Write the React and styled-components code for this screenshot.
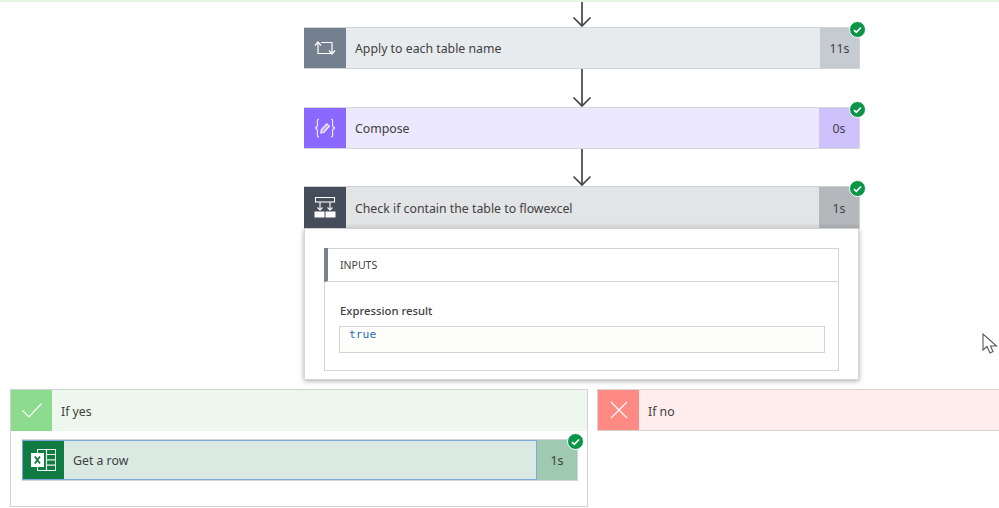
import React from 'react';
import styled, { createGlobalStyle } from 'styled-components';

const GlobalStyle = createGlobalStyle`
  html, body {
    margin: 0;
    padding: 0;
    background: #fff;
  }
  * {
    box-sizing: border-box;
  }
`;

const Page = styled.div`
  position: relative;
  width: 999px;
  height: 508px;
  overflow: hidden;
  background: #fff;
  font-family: "Noto Sans", "Open Sans", sans-serif;
  color: #333;
`;

const TopLine = styled.div`
  height: 2px;
  background: #e3f6e2;
`;

const FlowColumn = styled.div`
  display: flex;
  flex-direction: column;
  width: 556px;
  margin-left: 304px;
`;

const Connector = styled.div`
  display: flex;
  justify-content: center;
  height: ${(p) => p.$height}px;
`;

const Card = styled.div`
  position: relative;
  display: flex;
  width: 556px;
  height: ${(p) => p.$height || 42}px;
  flex: none;
  border: 1px solid ${(p) => p.$border};
  border-left: none;
  background: ${(p) => p.$bg};
  ${(p) =>
    p.$focus &&
    `
    &::after {
      content: "";
      position: absolute;
      top: 0;
      bottom: 0;
      left: 0;
      right: 40px;
      border: 1px solid #7fa6e0;
    }
  `}
`;

const CardIcon = styled.div`
  display: flex;
  align-items: center;
  justify-content: center;
  width: 42px;
  flex: none;
  background: ${(p) => p.$bg};
`;

const CardTitle = styled.div`
  flex: 1;
  display: flex;
  align-items: center;
  padding-left: 9px;
  padding-top: ${(p) => p.$nudge || 0}px;
  font-size: 12.3px;
  color: #404040;
`;

const Duration = styled.div`
  display: flex;
  align-items: center;
  justify-content: center;
  width: ${(p) => p.$width || 39}px;
  flex: none;
  padding-top: ${(p) => p.$nudge || 0}px;
  background: ${(p) => p.$bg};
  font-size: 12.3px;
  color: #404040;
`;

const Badge = styled.div`
  position: absolute;
  z-index: 1;
  top: -7px;
  right: -7px;
  width: 17px;
  height: 17px;
  display: flex;
  align-items: center;
  justify-content: center;
  border-radius: 50%;
  border: 1px solid #fff;
  background: #0a9548;
`;

const Shade = styled.div`
  position: absolute;
  left: 42px;
  right: 0;
  bottom: 0;
  height: 5px;
  background: linear-gradient(rgba(0, 0, 0, 0), rgba(0, 0, 0, 0.09));
`;

const DetailPanel = styled.div`
  width: 555px;
  height: 151px;
  padding: 19px 19px 8px 19px;
  background: #fff;
  border: 1px solid #d6d6d6;
  border-top: none;
  box-shadow: 0 1px 5px rgba(0, 0, 0, 0.35);
`;

const InputsBox = styled.div`
  height: 123px;
  border: 1px solid #d4d4d4;
`;

const InputsHeader = styled.div`
  display: flex;
  align-items: center;
  height: 34px;
  padding-left: 12px;
  padding-top: 1px;
  border-left: 4px solid #7a818a;
  border-bottom: 1px solid #d4d4d4;
  margin: -1px 0 0 -1px;
  font-size: 10.5px;
  color: #3f3f3f;
`;

const InputsBody = styled.div`
  padding: 21px 13px 0 14px;
`;

const FieldLabel = styled.div`
  margin-left: 1px;
  font-size: 11.3px;
  font-weight: 500;
  line-height: 16px;
  color: #404040;
`;

const FieldValue = styled.div`
  height: 27px;
  margin-top: 7px;
  padding: 1px 0 0 9px;
  border: 1px solid #d4d4d4;
  background: #fdfdfc;
  font-family: "DejaVu Sans Mono", "Liberation Mono", monospace;
  font-size: 11.3px;
  line-height: 14px;
  color: #2a6bb5;
`;

const BranchRow = styled.div`
  display: flex;
  gap: 9px;
  margin-top: 9px;
  padding-left: 10px;
`;

const YesBranch = styled.div`
  width: 578px;
  height: 118px;
  flex: none;
  border: 1px solid #d2d2d2;
`;

const NoBranch = styled.div`
  flex: 1;
  height: 42px;
  border: 1px solid #d9d0d0;
  border-right: none;
`;

const BranchHeader = styled.div`
  display: flex;
  height: ${(p) => p.$height}px;
  background: ${(p) => p.$bg};
`;

const BranchIcon = styled.div`
  display: flex;
  align-items: center;
  justify-content: center;
  width: 41px;
  flex: none;
  background: ${(p) => p.$bg};
`;

const BranchTitle = styled.div`
  display: flex;
  align-items: center;
  padding: 2px 0 0 9px;
  font-size: 12.3px;
  color: #404040;
`;

const BranchBody = styled.div`
  padding: 8px 9px 0 11px;
`;

const Cursor = styled.svg`
  position: absolute;
  left: 982px;
  top: 333px;
`;

const Arrow = () => (
  <svg width="24" height="100%" viewBox="0 0 24 38" preserveAspectRatio="xMidYMax slice" fill="none" stroke="#444" strokeWidth="1.7">
    <path d="M12 0V37" />
    <path d="M3.5 28.5L12 37L20.5 28.5" />
  </svg>
);

const CheckBadge = () => (
  <Badge>
    <svg width="9" height="8" viewBox="0 0 9 8" fill="none" stroke="#fff" strokeWidth="1.7">
      <path d="M1 4.2L3.3 6.3L8 1.5" />
    </svg>
  </Badge>
);

const LoopIcon = () => (
  <svg width="22" height="16" viewBox="0 0 22 16" fill="none" stroke="#fff" strokeWidth="1.2">
    <path d="M4 2.5V13.5H17" />
    <path d="M7 2.5H18V13.5" />
    <path d="M1 5.5L4 2L7 5.5" />
    <path d="M15 10.5L18 14L21 10.5" />
  </svg>
);

const ComposeIcon = () => (
  <svg width="22" height="20" viewBox="0 0 22 20" fill="none" stroke="#fff" strokeWidth="1.1" strokeOpacity="0.9">
    <path d="M5 1C2.5 1 3.5 4 3.5 6.5C3.5 8.5 3 9.5 1 10C3 10.5 3.5 11.5 3.5 13.5C3.5 16 2.5 19 5 19" />
    <path d="M17 1C19.5 1 18.5 4 18.5 6.5C18.5 8.5 19 9.5 21 10C19 10.5 18.5 11.5 18.5 13.5C18.5 16 19.5 19 17 19" />
    <path d="M6.8 15L7.4 11.6L12.8 5.8L15.4 8.2L10.1 14.2Z" fill="#fff" fillOpacity="0.45" />
  </svg>
);

const ConditionIcon = () => (
  <svg width="22" height="21" viewBox="0 0 22 21" fill="none" stroke="#fff" strokeWidth="1.1">
    <rect x="1.5" y="0.5" width="19" height="4.5" />
    <path d="M6 5V13M16 5V13" />
    <path d="M3.5 10.5L6 13L8.5 10.5M13.5 10.5L16 13L18.5 10.5" />
    <rect x="0.5" y="14.5" width="10" height="6" fill="#fff" stroke="none" />
    <rect x="11.5" y="14.5" width="10" height="6" fill="#fff" stroke="none" />
  </svg>
);

const ExcelIcon = () => (
  <svg width="25" height="22" viewBox="0 0 25 22" fill="none">
    <rect x="6.5" y="0.5" width="18" height="21" fill="#107c41" stroke="#e8f3ec" />
    <path d="M15.5 5.5H24.5M15.5 10.8H24.5M15.5 16.2H24.5M15.5 0.5V21.5" stroke="#e8f3ec" strokeWidth="1.2" />
    <rect x="0" y="4" width="13" height="14" fill="#fff" />
    <path d="M3.8 7.5L9 14.5M9 7.5L3.8 14.5" stroke="#107c41" strokeWidth="1.8" />
  </svg>
);

const CheckMark = () => (
  <svg width="20" height="15" viewBox="0 0 20 15" fill="none" stroke="#fff" strokeWidth="1.2">
    <path d="M0.5 7.5L7 14L19.5 0.5" />
  </svg>
);

const CrossMark = () => (
  <svg width="18" height="18" viewBox="0 0 18 18" fill="none" stroke="#fff" strokeWidth="1.1">
    <path d="M1 1L17 17M17 1L1 17" />
  </svg>
);

const App = () => {
  return (
    <Page>
      <GlobalStyle />
      <TopLine />
      <FlowColumn>
        <Connector $height={25}><Arrow /></Connector>
        <Card $bg="#e8ebee" $border="#d2d5d8">
          <CardIcon $bg="#74808f"><LoopIcon /></CardIcon>
          <CardTitle>Apply to each table name</CardTitle>
          <Duration $bg="#c6cbd1">11s</Duration>
          <CheckBadge />
        </Card>
        <Connector $height={38}><Arrow /></Connector>
        <Card $bg="#ece8fd" $border="#d8d6e0">
          <CardIcon $bg="#8b68ff"><ComposeIcon /></CardIcon>
          <CardTitle>Compose</CardTitle>
          <Duration $bg="#cec2fd" $width={40}>0s</Duration>
          <CheckBadge />
        </Card>
        <Connector $height={37}><Arrow /></Connector>
        <Card $bg="#e3e4e6" $border="#cfd0d2" $height={43}>
          <CardIcon $bg="#444d59"><ConditionIcon /></CardIcon>
          <CardTitle $nudge={1}>Check if contain the table to flowexcel</CardTitle>
          <Duration $bg="#b4b7bb" $width={40} $nudge={1}>1s</Duration>
          <Shade />
          <CheckBadge />
        </Card>
        <DetailPanel>
          <InputsBox>
            <InputsHeader>INPUTS</InputsHeader>
            <InputsBody>
              <FieldLabel>Expression result</FieldLabel>
              <FieldValue>true</FieldValue>
            </InputsBody>
          </InputsBox>
        </DetailPanel>
      </FlowColumn>
      <BranchRow>
        <YesBranch>
          <BranchHeader $bg="#edf7ee" $height={41}>
            <BranchIcon $bg="#8cdb8f"><CheckMark /></BranchIcon>
            <BranchTitle>If yes</BranchTitle>
          </BranchHeader>
          <BranchBody>
            <Card $bg="#dae9e2" $border="#d0d8d3" $focus>
              <CardIcon $bg="#107c41"><ExcelIcon /></CardIcon>
              <CardTitle>Get a row</CardTitle>
              <Duration $bg="#9fc9b0" $width={40}>1s</Duration>
              <CheckBadge />
            </Card>
          </BranchBody>
        </YesBranch>
        <NoBranch>
          <BranchHeader $bg="#ffecec" $height={40}>
            <BranchIcon $bg="#ff8a84"><CrossMark /></BranchIcon>
            <BranchTitle>If no</BranchTitle>
          </BranchHeader>
        </NoBranch>
      </BranchRow>
      <Cursor width="17" height="24" viewBox="0 0 17 24" fill="#fff" stroke="#55585c" strokeWidth="1.1">
        <path d="M1 1V17L5 13.5L8 20L11 18.5L8.5 13L14.5 13Z" />
      </Cursor>
    </Page>
  );
};

export default App;
